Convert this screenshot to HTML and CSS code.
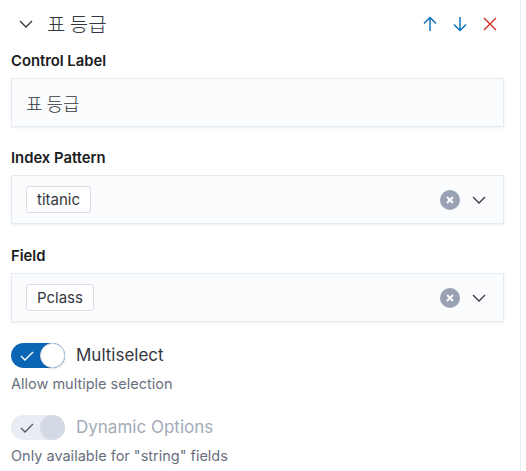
FILE: index.html
```html
<!DOCTYPE html>
<html>
<head>
<meta charset="utf-8">
<link rel="stylesheet" href="styles.css">
</head>
<body>
<div class="panel">
  <div class="header">
    <svg class="hchev" width="14" height="8" viewBox="0 0 14 8"><path d="M1 1l6 6 6-6" fill="none" stroke="#343741" stroke-width="1.3"/></svg>
    <span class="title">표 등급</span>
    <div class="actions">
      <svg width="14" height="16" viewBox="0 0 14 16"><path d="M7 15V1.5M1 7.5l6-6 6 6" fill="none" stroke="#006bb8" stroke-width="1.4"/></svg>
      <svg width="14" height="16" viewBox="0 0 14 16"><path d="M7 1v13.5M1 8.5l6 6 6-6" fill="none" stroke="#006bb8" stroke-width="1.4"/></svg>
      <svg width="14" height="14" viewBox="0 0 14 14"><path d="M1 1l12 12M13 1L1 13" fill="none" stroke="#cc2c22" stroke-width="1.4"/></svg>
    </div>
  </div>

  <div class="field">
    <div class="label">Control Label</div>
    <div class="box"><span class="value">표 등급</span></div>
  </div>

  <div class="field">
    <div class="label">Index Pattern</div>
    <div class="box">
      <span class="tag">titanic</span>
      <span class="spacer"></span>
      <span class="clear"><svg width="8" height="8" viewBox="0 0 8 8"><path d="M1 1l6 6M7 1L1 7" stroke="#fff" stroke-width="1.8"/></svg></span>
      <svg class="dchev" width="14" height="8" viewBox="0 0 14 8"><path d="M1 1l6 6 6-6" fill="none" stroke="#343741" stroke-width="1.3"/></svg>
    </div>
  </div>

  <div class="field">
    <div class="label">Field</div>
    <div class="box">
      <span class="tag">Pclass</span>
      <span class="spacer"></span>
      <span class="clear"><svg width="8" height="8" viewBox="0 0 8 8"><path d="M1 1l6 6M7 1L1 7" stroke="#fff" stroke-width="1.8"/></svg></span>
      <svg class="dchev" width="14" height="8" viewBox="0 0 14 8"><path d="M1 1l6 6 6-6" fill="none" stroke="#343741" stroke-width="1.3"/></svg>
    </div>
  </div>

  <div class="switch-row">
    <div class="switch on">
      <svg class="check" width="14" height="10" viewBox="0 0 14 10"><path d="M1 5l4 4 8-8" fill="none" stroke="#fff" stroke-width="1.4"/></svg>
      <span class="thumb"></span>
    </div>
    <span class="switch-label">Multiselect</span>
  </div>
  <div class="help">Allow multiple selection</div>

  <div class="switch-row second">
    <div class="switch off">
      <svg class="check" width="14" height="10" viewBox="0 0 14 10"><path d="M1 5l4 4 8-8" fill="none" stroke="#535966" stroke-width="1.3"/></svg>
      <span class="thumb"></span>
    </div>
    <span class="switch-label disabled">Dynamic Options</span>
  </div>
  <div class="help">Only available for "string" fields</div>
</div>
</body>
</html>
```

FILE: styles.css
```css
html, body {
  margin: 0;
  padding: 0;
  background: #fff;
}
body {
  font-family: Inter, "Noto Sans CJK KR", sans-serif;
  color: #343741;
}
.panel {
  width: 493px;
  height: 471px;
  padding: 10px 16px 0 11px;
  border-right: 1px solid #e9ecf1;
  box-sizing: content-box;
}
.header {
  height: 28px;
  display: flex;
  align-items: center;
}
.hchev {
  margin-left: 8px;
  margin-right: 14px;
}
.title {
  font-family: "Noto Sans CJK KR", sans-serif;
  font-size: 20px;
  font-weight: 300;
  color: #343741;
  line-height: 28px;
}
.actions {
  margin-left: auto;
  margin-right: 7px;
  display: flex;
  align-items: center;
  gap: 16px;
}
.field {
  margin-top: 13px;
}
.field + .field {
  margin-top: 21px;
}
.field + .field + .field {
  margin-top: 22px;
}
.label {
  font-size: 14.8px;
  font-weight: 600;
  line-height: 20px;
  color: #1a1c21;
  margin-bottom: 7px;
}
.box {
  height: 49px;
  box-sizing: border-box;
  border: 1px solid #e6eaf1;
  background: #fbfcfd;
  box-shadow: 0 1px 2px rgba(152, 162, 179, 0.18);
  display: flex;
  align-items: center;
  padding: 0 17px 0 14px;
}
.value {
  font-family: "Noto Sans CJK KR", sans-serif;
  font-size: 18px;
  font-weight: 300;
  color: #343741;
}
.tag {
  height: 27px;
  box-sizing: border-box;
  border: 1px solid #d9dee8;
  border-radius: 3px;
  background: #fff;
  padding: 0 10px;
  font-size: 15px;
  line-height: 25px;
  color: #343741;
}
.spacer {
  flex: 1;
}
.clear {
  width: 20px;
  height: 20px;
  border-radius: 50%;
  background: #98a2b3;
  display: flex;
  align-items: center;
  justify-content: center;
  margin-right: 12px;
}
.switch-row {
  margin-top: 21px;
  display: flex;
  align-items: center;
  height: 25px;
}
.switch {
  position: relative;
  width: 54px;
  height: 25px;
  border-radius: 13px;
  display: flex;
  align-items: center;
  flex-shrink: 0;
}
.switch.on {
  background: #0a65b5;
}
.switch.off {
  background: #e9edf3;
}
.check {
  margin-left: 9px;
}
.thumb {
  position: absolute;
  right: 0;
  top: 0;
  width: 25px;
  height: 25px;
  box-sizing: border-box;
  border-radius: 50%;
}
.switch.on .thumb {
  background: #fff;
  border: 1px solid #d3dae6;
  box-shadow: 0 1px 2px rgba(0, 0, 0, 0.15);
}
.switch.off .thumb {
  background: #d3dae6;
}
.switch-label {
  margin-left: 11px;
  font-size: 17px;
  color: #343741;
  line-height: 25px;
}
.switch-label.disabled {
  color: #a2abba;
}
.help {
  margin-top: 6px;
  font-size: 14.5px;
  line-height: 20px;
  color: #69707d;
}
```
